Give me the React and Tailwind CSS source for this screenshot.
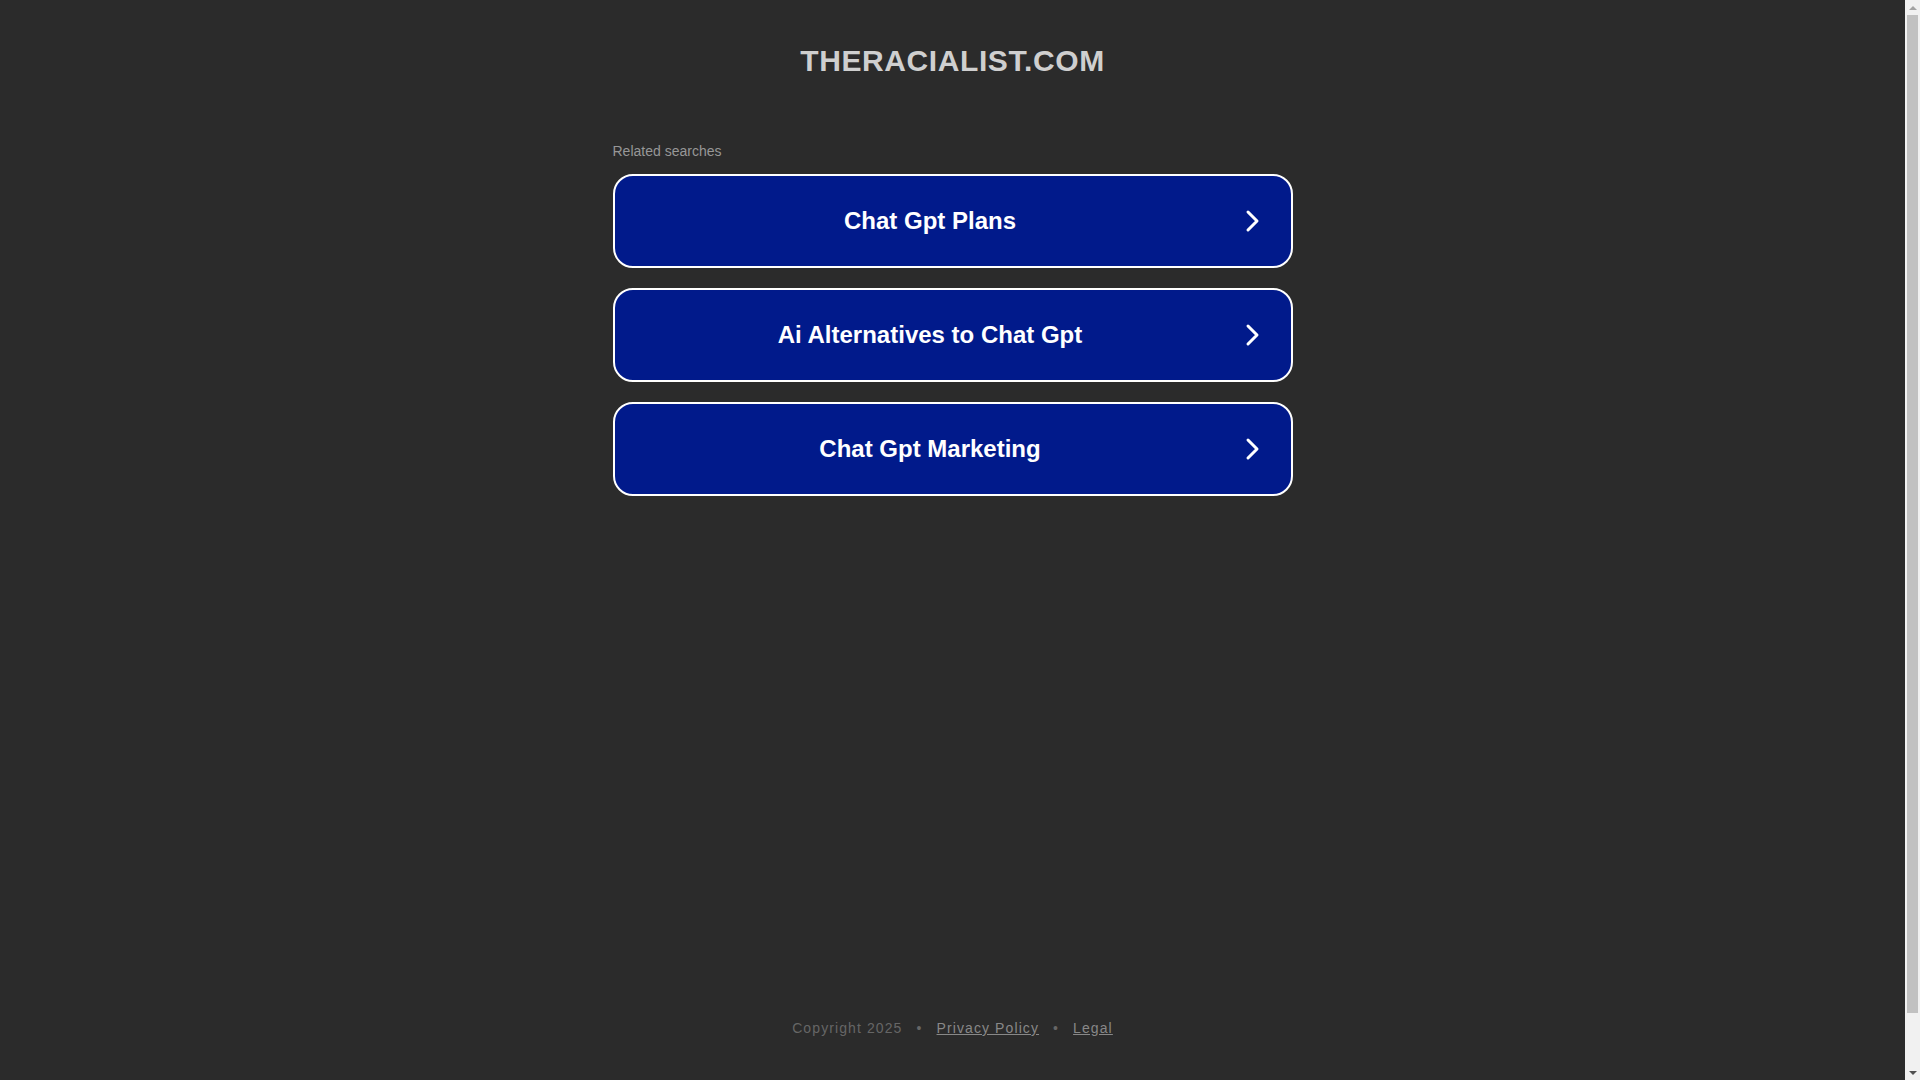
import React from 'react';

const searches = ['Chat Gpt Plans', 'Ai Alternatives to Chat Gpt', 'Chat Gpt Marketing'];

const Chevron = () => (
  <svg viewBox="0 0 20 24" className="h-[24px] w-[20px]" fill="none" stroke="#ffffff" strokeWidth="3" strokeLinecap="round" strokeLinejoin="round">
    <path d="M6 3 L15 12 L6 21" />
  </svg>
);

// fake browser scrollbar, the reference shows one on the right
const Scrollbar = () => (
  <div className="flex h-full w-[15px] flex-col bg-[#f1f1f1]">
    <div className="flex h-[15px] items-center justify-center">
      <div className="h-0 w-0 border-x-[4px] border-b-[4px] border-x-transparent border-b-[#a3a3a3]" />
    </div>
    <div className="mx-[2px] h-[998px] bg-[#c1c1c1]" />
    <div className="flex-1" />
    <div className="flex h-[15px] items-center justify-center">
      <div className="h-0 w-0 border-x-[4px] border-t-[4px] border-x-transparent border-t-[#505050]" />
    </div>
  </div>
);

const App = () => {
  return (
    <div className="flex h-[1080px] overflow-hidden bg-[#2b2b2b] font-['Liberation_Sans',Arial,sans-serif]">
      <div className="flex flex-1 flex-col items-center">
        <h1 className="mt-[43px] text-[30px] font-bold leading-[36px] tracking-[0.6px] text-[#cfcfcf]">
          THERACIALIST.COM
        </h1>

        <div className="mt-[62px] w-[680px]">
          <p className="text-[14px] leading-[20px] text-[#979797]">Related searches</p>

          <div className="mt-[13px] flex flex-col gap-[20px]">
            {searches.map((item) => (
              <a
                key={item}
                href="#"
                className="flex h-[94px] items-center rounded-[20px] border-2 border-white bg-[#011a8b] pl-[4px] pr-[29px]"
              >
                <span className="flex-1 text-center text-[24px] font-bold text-white">{item}</span>
                <span className="flex w-[20px] justify-center">
                  <Chevron />
                </span>
              </a>
            ))}
          </div>
        </div>

        <div className="flex-1" />

        <footer className="mb-[42px] flex items-center text-[14px] leading-[20px] tracking-[1.1px] text-[#666666]">
          <span>Copyright 2025</span>
          <span className="mx-[14px]">•</span>
          <a href="#" className="text-[#888888] underline">Privacy Policy</a>
          <span className="mx-[14px]">•</span>
          <a href="#" className="text-[#888888] underline">Legal</a>
        </footer>
      </div>
      <Scrollbar />
    </div>
  );
};

export default App;
